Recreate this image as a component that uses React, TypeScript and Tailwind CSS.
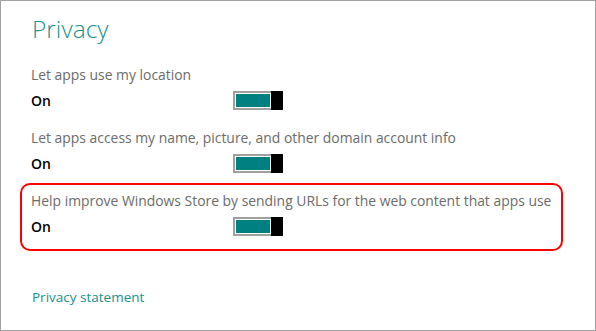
import React from 'react';

const font = { fontFamily: '"Open Sans", "Noto Sans", sans-serif' };

const Toggle = () => (
    <div className="flex h-[19px] w-[50px]">
        <div className="flex-1 border-2 border-r-0 border-[#a0a0a0] bg-white p-px">
            <div className="h-full w-full bg-[#008080]" />
        </div>
        <div className="w-[12px] bg-black" />
    </div>
);

interface SettingProps {
    label: string;
    highlighted?: boolean;
}

const Setting = ({ label, highlighted }: SettingProps) => (
    <div
        className={
            highlighted
                ? 'w-[543px] rounded-[10px] border-2 border-[#ff0000] pl-[9px] pt-[6px] pb-[13px]'
                : 'w-[543px] rounded-[10px] border-2 border-transparent pl-[9px] pt-[6px] pb-[8px]'
        }
    >
        <p className="h-[20px] text-[13.9px] leading-[20px] text-[#6b6b6b] whitespace-nowrap">{label}</p>
        <div className="mt-[6px] flex items-center">
            <span className="w-[202px] text-[14px] font-semibold leading-[19px] text-black">On</span>
            <Toggle />
        </div>
    </div>
);

export default function App() {
    return (
        <div style={font} className="h-[331px] w-[596px] overflow-hidden border border-[#a0a0a0] bg-white">
            <div className="pl-[19px] pt-[12px]">
                <h1 className="ml-[12px] -mt-[2px] mb-[2px] h-[44px] text-[24.5px] font-light leading-[36px] text-[#17928d]">Privacy</h1>
                <Setting label="Let apps use my location" />
                <Setting label="Let apps access my name, picture, and other domain account info" />
                <Setting label="Help improve Windows Store by sending URLs for the web content that apps use" highlighted />
                <a className="ml-[12px] mt-[36px] block text-[13.5px] leading-[20px] text-[#17928d]">Privacy statement</a>
            </div>
        </div>
    );
}
